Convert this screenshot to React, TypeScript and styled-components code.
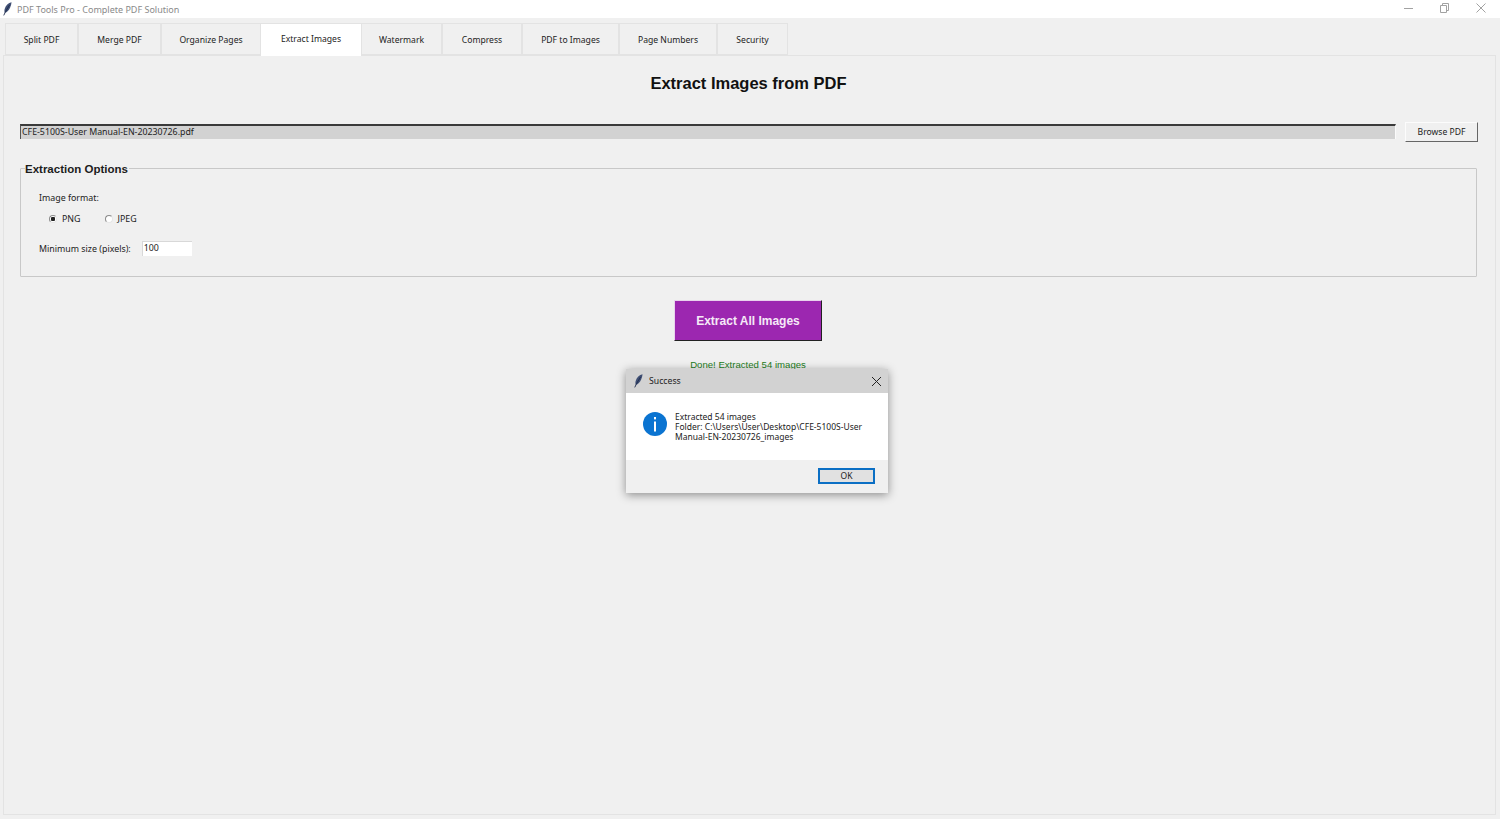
import React from "react";
import styled, { createGlobalStyle } from "styled-components";

const Global = createGlobalStyle`
  html, body { margin: 0; padding: 0; height: 100%; background: #f0f0f0; }
  #root { height: 819px; }
  * { box-sizing: border-box; }
`;

const UI = `"Noto Sans", "Open Sans", sans-serif`;
const ARIAL = `"Liberation Sans", Arial, sans-serif`;

const Win = styled.div`
  position: relative;
  width: 1500px;
  height: 819px;
  overflow: hidden;
  display: flex;
  flex-direction: column;
  background: #f0f0f0;
  font-family: ${UI};
  color: #1a1a1a;
`;

const TitleBar = styled.header`
  height: 18px;
  flex: none;
  background: #fff;
  display: flex;
  align-items: center;
  padding-left: 3px;
  gap: 5px;
`;

const TitleText = styled.span`
  font-size: 9px;
  color: #8a8a8a;
`;

const WinButtons = styled.div`
  margin-left: auto;
  display: flex;
  align-items: center;
  gap: 26px;
  padding: 0 14px 2px 0;
  color: #a2a2a2;
  svg { display: block; }
`;

const Tabs = styled.nav`
  height: 37px;
  flex: none;
  padding: 4px 0 0 5px;
  display: flex;
  align-items: flex-end;
  position: relative;
  z-index: 1;
`;

const Tab = styled.div<{ $w: number; $active?: boolean }>`
  width: ${(p) => p.$w}px;
  height: ${(p) => (p.$active ? 33 : 32)}px;
  margin-bottom: ${(p) => (p.$active ? -1 : 0)}px;
  background: ${(p) => (p.$active ? "#fff" : "#f0f0f0")};
  border: 1px solid #e3e3e3;
  border-left-width: ${(p) => (p.$active ? 0 : 1)}px;
  border-bottom: ${(p) => (p.$active ? "none" : "1px solid #e3e3e3")};
  border-right-width: ${(p) => (p.$active ? 0 : 1)}px;
  display: flex;
  align-items: center;
  justify-content: center;
  padding-top: ${(p) => (p.$active ? 0 : 1)}px;
  padding-bottom: ${(p) => (p.$active ? 3 : 0)}px;
  font-size: 8.6px;
  color: #222;
  white-space: nowrap;
`;

const Panel = styled.main`
  flex: none;
  width: 1493px;
  height: 760px;
  margin-left: 3px;
  border: 1px solid #e3e3e3;
  display: flex;
  flex-direction: column;
  padding: 0 17px 0 16px;
`;

const Heading = styled.h1`
  margin: 17px 0 0;
  height: 20px;
  padding-right: 1px;
  text-align: center;
  font: bold 16.5px/20px ${ARIAL};
  color: #111;
`;

const FileRow = styled.div`
  margin-top: 29px;
  display: flex;
  align-items: flex-start;
  justify-content: space-between;
  height: 20px;
`;

const FileEntry = styled.div`
  width: 1376px;
  height: 15px;
  margin-top: 2px;
  background: #d2d2d2;
  border-top: 2px solid #3a3a3a;
  border-left: 1px solid #555;
  border-right: 1px solid #fafafa;
  padding-left: 1px;
  font-size: 8.8px;
  line-height: 13px;
  color: #222;
`;

const BrowseButton = styled.button`
  width: 73px;
  height: 20px;
  padding: 0;
  background: #f0f0f0;
  border: 1px solid;
  border-color: #fcfcfc #666 #666 #fcfcfc;
  font-family: ${UI};
  font-size: 8.6px;
  color: #222;
`;

const Group = styled.fieldset`
  margin: 19px 0 0;
  width: 1457px;
  height: 116px;
  padding: 0 0 0 18px;
  border: 1px solid #c8c8c8;
  border-radius: 1px;
  display: flex;
  flex-direction: column;
  align-items: flex-start;
`;

const Legend = styled.legend`
  margin-left: -14px;
  padding: 1px 1px 0 0;
  font: bold 11.5px/14px ${ARIAL};
  color: #1c1c1c;
`;

const Label = styled.span`
  font-size: 8.85px;
  line-height: 14px;
  color: #222;
`;

const FormatLabel = styled(Label)`
  margin-top: 15px;
`;

const RadioRow = styled.div`
  margin-top: 7px;
  margin-left: 10px;
  display: flex;
  gap: 24px;
`;

const RadioItem = styled.label`
  display: flex;
  align-items: center;
  gap: 5px;
  font-size: 8.85px;
  line-height: 14px;
  color: #222;
`;

const RadioDot = styled.span<{ $on?: boolean }>`
  width: 8px;
  height: 8px;
  border-radius: 50%;
  background: ${(p) => (p.$on ? "radial-gradient(circle, #222 0 2px, #fff 2.5px)" : "#fff")};
  border: 1px solid;
  border-color: #8a8a8a #e6e6e6 #e6e6e6 #8a8a8a;
`;

const SizeRow = styled.div`
  margin-top: 15px;
  display: flex;
  align-items: center;
  gap: 11px;
`;

const SizeInput = styled.div`
  width: 50px;
  height: 15px;
  background: #fff;
  border-top: 1px solid #d8d8d8;
  border-left: 1px solid #d8d8d8;
  padding-left: 1px;
  font-size: 8.85px;
  line-height: 13px;
  color: #222;
`;

const ActionWrap = styled.div`
  margin-top: 23px;
  display: flex;
  justify-content: center;
  padding-right: 2px;
`;

const ActionButton = styled.button`
  width: 148px;
  height: 41px;
  padding: 0;
  background: #9c27b0;
  border: 1px solid;
  border-color: #e9d3ed #222 #222 #e9d3ed;
  color: #f5e9f7;
  font: bold 12px ${ARIAL};
`;

const Status = styled.div`
  margin-top: 17px;
  text-align: center;
  padding-right: 2px;
  font: 9.6px/14px ${ARIAL};
  color: #1d7d22;
`;

const Dialog = styled.section`
  position: absolute;
  left: 626px;
  top: 369px;
  width: 262px;
  height: 124px;
  background: #f0f0f0;
  display: flex;
  flex-direction: column;
  box-shadow: 0 2px 9px rgba(0, 0, 0, 0.42);
  z-index: 2;
`;

const DialogTitle = styled.div`
  height: 24px;
  flex: none;
  background: #d2d2d2;
  display: flex;
  align-items: center;
  padding: 0 6px 0 8px;
  gap: 6px;
  font-size: 8.7px;
  color: #222;
`;

const DialogClose = styled.span`
  margin-left: auto;
  display: flex;
  svg { display: block; }
`;

const DialogBody = styled.div`
  height: 67px;
  flex: none;
  background: #fff;
  padding: 19px 20px 0 17px;
  display: flex;
  gap: 8px;
`;

const InfoIcon = styled.svg`
  flex: none;
`;

const Message = styled.div`
  font-size: 8.5px;
  line-height: 10px;
  color: #222;
`;

const MessageLine = styled.div`
  white-space: nowrap;
`;

const DialogFooter = styled.div`
  flex: 1;
  display: flex;
  justify-content: flex-end;
  align-items: flex-start;
  padding: 8px 13px 0 0;
`;

const OkButton = styled.button`
  width: 57px;
  height: 16px;
  padding: 0;
  background: #e1e1e1;
  border: 2px solid #0b6fc4;
  font-family: ${UI};
  font-size: 8.5px;
  line-height: 12px;
  color: #222;
`;

const Feather = ({ size = 11 }: { size?: number }) => (
  <svg width={size * 0.75} height={size * 1.15} viewBox="0 0 9 14" fill="none">
    <path d="M8.6 0.3C5.4 1 2.6 3.4 1.6 7C1.2 8.6 1.4 10 1.8 11C4 10.4 6 8.6 7.2 5.6C8 3.6 8.5 1.8 8.6 0.3Z" fill="#3f4f74" />
    <path d="M6.6 3L2.6 9.6L0.7 13.6" stroke="#1d2a4a" strokeWidth="0.9" />
  </svg>
);

const tabs = [
  ["Split PDF", 73],
  ["Merge PDF", 83],
  ["Organize Pages", 100],
  ["Extract Images", 100],
  ["Watermark", 81],
  ["Compress", 80],
  ["PDF to Images", 97],
  ["Page Numbers", 98],
  ["Security", 71],
] as const;

export default function App() {
  return (
    <Win>
      <Global />
      <TitleBar>
        <Feather size={12} />
        <TitleText>PDF Tools Pro - Complete PDF Solution</TitleText>
        <WinButtons>
          <svg width="10" height="10" viewBox="0 0 10 10"><path d="M0 5.5H9" stroke="currentColor" /></svg>
          <svg width="10" height="10" viewBox="0 0 10 10" fill="none" stroke="currentColor"><path d="M0.5 2.5H6.5V9.5H0.5ZM2.5 2.5V0.5H8.5V7.5H6.5" /></svg>
          <svg width="10" height="10" viewBox="0 0 10 10" fill="none" stroke="currentColor"><path d="M0.5 0.5L9.5 9.5M9.5 0.5L0.5 9.5" /></svg>
        </WinButtons>
      </TitleBar>

      <Tabs>
        {tabs.map(([name, w]) => (
          <Tab key={name} $w={w} $active={name === "Extract Images"}>{name}</Tab>
        ))}
      </Tabs>

      <Panel>
        <Heading>Extract Images from PDF</Heading>
        <FileRow>
          <FileEntry>CFE-5100S-User Manual-EN-20230726.pdf</FileEntry>
          <BrowseButton>Browse PDF</BrowseButton>
        </FileRow>
        <Group>
          <Legend>Extraction Options</Legend>
          <FormatLabel>Image format:</FormatLabel>
          <RadioRow>
            <RadioItem><RadioDot $on />PNG</RadioItem>
            <RadioItem><RadioDot />JPEG</RadioItem>
          </RadioRow>
          <SizeRow>
            <Label>Minimum size (pixels):</Label>
            <SizeInput>100</SizeInput>
          </SizeRow>
        </Group>
        <ActionWrap>
          <ActionButton>Extract All Images</ActionButton>
        </ActionWrap>
        <Status>Done! Extracted 54 images</Status>
      </Panel>

      <Dialog>
        <DialogTitle>
          <Feather size={12} />
          <span>Success</span>
          <DialogClose>
            <svg width="11" height="11" viewBox="0 0 11 11" fill="none" stroke="#222" strokeWidth="1"><path d="M1 1L10 10M10 1L1 10" /></svg>
          </DialogClose>
        </DialogTitle>
        <DialogBody>
          <InfoIcon width="24" height="24" viewBox="0 0 24 24">
            <circle cx="12" cy="12" r="12" fill="#0b74d1" />
            <rect x="11" y="5" width="2" height="2.4" fill="#fff" />
            <rect x="11" y="9.5" width="2" height="10" fill="#fff" />
          </InfoIcon>
          <Message>
            <MessageLine>Extracted 54 images</MessageLine>
            <MessageLine>Folder: C:\Users\User\Desktop\CFE-5100S-User</MessageLine>
            <MessageLine>Manual-EN-20230726_images</MessageLine>
          </Message>
        </DialogBody>
        <DialogFooter>
          <OkButton>OK</OkButton>
        </DialogFooter>
      </Dialog>
    </Win>
  );
}
